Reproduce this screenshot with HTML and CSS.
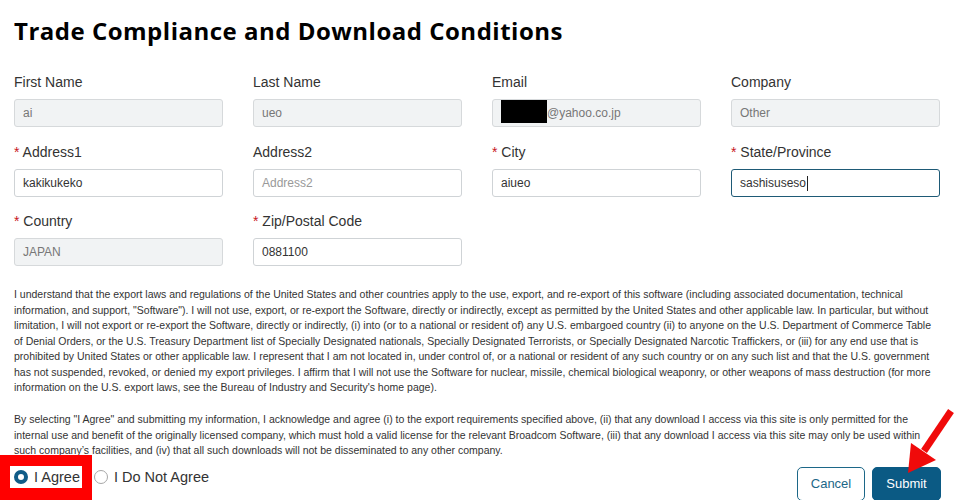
FILE: index.html
```html
<!DOCTYPE html>
<html lang="en">
<head>
<meta charset="utf-8">
<title>Trade Compliance and Download Conditions</title>
<link rel="stylesheet" href="styles.css">
</head>
<body>
<div class="page">
  <h1 class="title">Trade Compliance and Download Conditions</h1>

  <div class="form-grid">
    <div class="field">
      <div class="label">First Name</div>
      <div class="box disabled">ai</div>
    </div>
    <div class="field">
      <div class="label">Last Name</div>
      <div class="box disabled">ueo</div>
    </div>
    <div class="field">
      <div class="label">Email</div>
      <div class="box disabled email"><span class="redact"></span>@yahoo.co.jp</div>
    </div>
    <div class="field">
      <div class="label">Company</div>
      <div class="box disabled">Other</div>
    </div>

    <div class="field">
      <div class="label"><span class="req">*</span> Address1</div>
      <div class="box">kakikukeko</div>
    </div>
    <div class="field">
      <div class="label">Address2</div>
      <div class="box placeholder">Address2</div>
    </div>
    <div class="field">
      <div class="label"><span class="req">*</span> City</div>
      <div class="box">aiueo</div>
    </div>
    <div class="field">
      <div class="label"><span class="req">*</span> State/Province</div>
      <div class="box focused">sashisuseso<span class="caret"></span></div>
    </div>

    <div class="field">
      <div class="label"><span class="req">*</span> Country</div>
      <div class="box disabled">JAPAN</div>
    </div>
    <div class="field">
      <div class="label"><span class="req">*</span> Zip/Postal Code</div>
      <div class="box">0881100</div>
    </div>
  </div>

  <p class="legal first">I understand that the export laws and regulations of the United States and other countries apply to the use, export, and re-export of this software (including associated documentation, technical information, and support, "Software"). I will not use, export, or re-export the Software, directly or indirectly, except as permitted by the United States and other applicable law. In particular, but without limitation, I will not export or re-export the Software, directly or indirectly, (i) into (or to a national or resident of) any U.S. embargoed country (ii) to anyone on the U.S. Department of Commerce Table of Denial Orders, or the U.S. Treasury Department list of Specially Designated nationals, Specially Designated Terrorists, or Specially Designated Narcotic Traffickers, or (iii) for any end use that is prohibited by United States or other applicable law. I represent that I am not located in, under control of, or a national or resident of any such country or on any such list and that the U.S. government has not suspended, revoked, or denied my export privileges. I affirm that I will not use the Software for nuclear, missile, chemical biological weaponry, or other weapons of mass destruction (for more information on the U.S. export laws, see the Bureau of Industry and Security's home page).</p>

  <p class="legal second">By selecting "I Agree" and submitting my information, I acknowledge and agree (i) to the export requirements specified above, (ii) that any download I access via this site is only permitted for the internal use and benefit of the originally licensed company, which must hold a valid license for the relevant Broadcom Software, (iii) that any download I access via this site may only be used within such company’s facilities, and (iv) that all such downloads will not be disseminated to any other company.</p>

  <div class="actions">
    <div class="choices">
      <label class="choice"><span class="radio checked"></span>I Agree</label>
      <label class="choice"><span class="radio"></span>I Do Not Agree</label>
      <span class="highlight"></span>
    </div>
    <div class="buttons">
      <button class="btn btn-outline">Cancel</button>
      <button class="btn btn-primary">Submit</button>
    </div>
  </div>

  <svg class="arrow" width="60" height="80" viewBox="0 0 60 80" aria-hidden="true">
    <line x1="51" y1="6" x2="24" y2="46" stroke="#f00a0a" stroke-width="7" stroke-linecap="butt"/>
    <polygon points="11,38 36,55 8,68" fill="#f00a0a"/>
  </svg>
</div>
</body>
</html>
```

FILE: styles.css
```css
* { box-sizing: border-box; }

html, body {
  margin: 0;
  padding: 0;
  background: #ffffff;
}

body {
  font-family: "Liberation Sans", Arial, sans-serif;
  color: #333333;
  overflow: hidden;
}

.page {
  position: relative;
  width: 960px;
  height: 500px;
  padding: 16px 20px 0 14px;
}

.title {
  margin: 0;
  font-family: "Open Sans", "Liberation Sans", sans-serif;
  font-weight: 700;
  font-size: 24px;
  line-height: 30px;
  letter-spacing: 0.5px;
  color: #000000;
}

.form-grid {
  margin-top: 26px;
  display: grid;
  grid-template-columns: repeat(4, 1fr);
  column-gap: 30px;
  row-gap: 14.5px;
}

.field {
  display: flex;
  flex-direction: column;
}

.label {
  font-size: 14px;
  line-height: 20px;
  color: #333333;
  margin-bottom: 7px;
}

.req {
  color: #c7161d;
}

.box {
  position: relative;
  height: 28px;
  border: 1px solid #cfd3d6;
  border-radius: 3px;
  background: #ffffff;
  font-size: 12px;
  line-height: 26px;
  padding: 0 8px;
  color: #333333;
  white-space: nowrap;
}

.box.disabled {
  background: #f1f3f4;
  color: #777777;
  border-color: #d6d9db;
}

.box.placeholder {
  color: #999999;
}

.box.focused {
  border-color: #1e5a76;
}

.box.email {
  padding-left: 54px;
}

.redact {
  position: absolute;
  left: 8px;
  top: 0px;
  width: 46px;
  height: 23px;
  background: #000000;
}

.caret {
  display: inline-block;
  width: 1px;
  height: 15px;
  background: #222222;
  vertical-align: middle;
  margin-left: 1px;
}

.legal {
  margin: 0 4px 0 0;
  font-size: 10.5px;
  line-height: 15.5px;
  color: #333333;
}

.legal.first {
  margin-top: 21px;
}

.legal.second {
  margin-top: 16.5px;
}

.actions {
  margin-top: 8px;
  display: flex;
  justify-content: space-between;
  align-items: flex-start;
  height: 34px;
}

.choices {
  position: relative;
  display: flex;
  align-items: center;
  gap: 14px;
}

.choice {
  display: flex;
  align-items: center;
  gap: 6px;
  font-size: 14.5px;
  color: #333333;
  line-height: 20px;
}

.radio {
  display: inline-block;
  width: 14px;
  height: 14px;
  border-radius: 50%;
  border: 1px solid #a7a7a7;
  background: #ffffff;
}

.radio.checked {
  border: 4.5px solid #105c88;
  background: #ffffff;
}

.highlight {
  position: absolute;
  left: -14px;
  top: -12px;
  width: 92px;
  height: 46px;
  border-style: solid;
  border-color: #ff0000;
  border-width: 11px 10px 13px 10px;
}

.buttons {
  display: flex;
  gap: 7px;
  margin-right: -1px;
}

.btn {
  height: 34px;
  border-radius: 5px;
  font-family: "Liberation Sans", Arial, sans-serif;
  font-size: 13px;
  padding: 0;
  cursor: pointer;
}

.btn-outline {
  width: 68px;
  background: #ffffff;
  color: #1c6788;
  border: 1px solid #1c6788;
}

.btn-primary {
  width: 69px;
  background: #0b5a84;
  color: #ffffff;
  border: 1px solid #0b5a84;
}

.arrow {
  position: absolute;
  left: 900px;
  top: 405px;
}
```
